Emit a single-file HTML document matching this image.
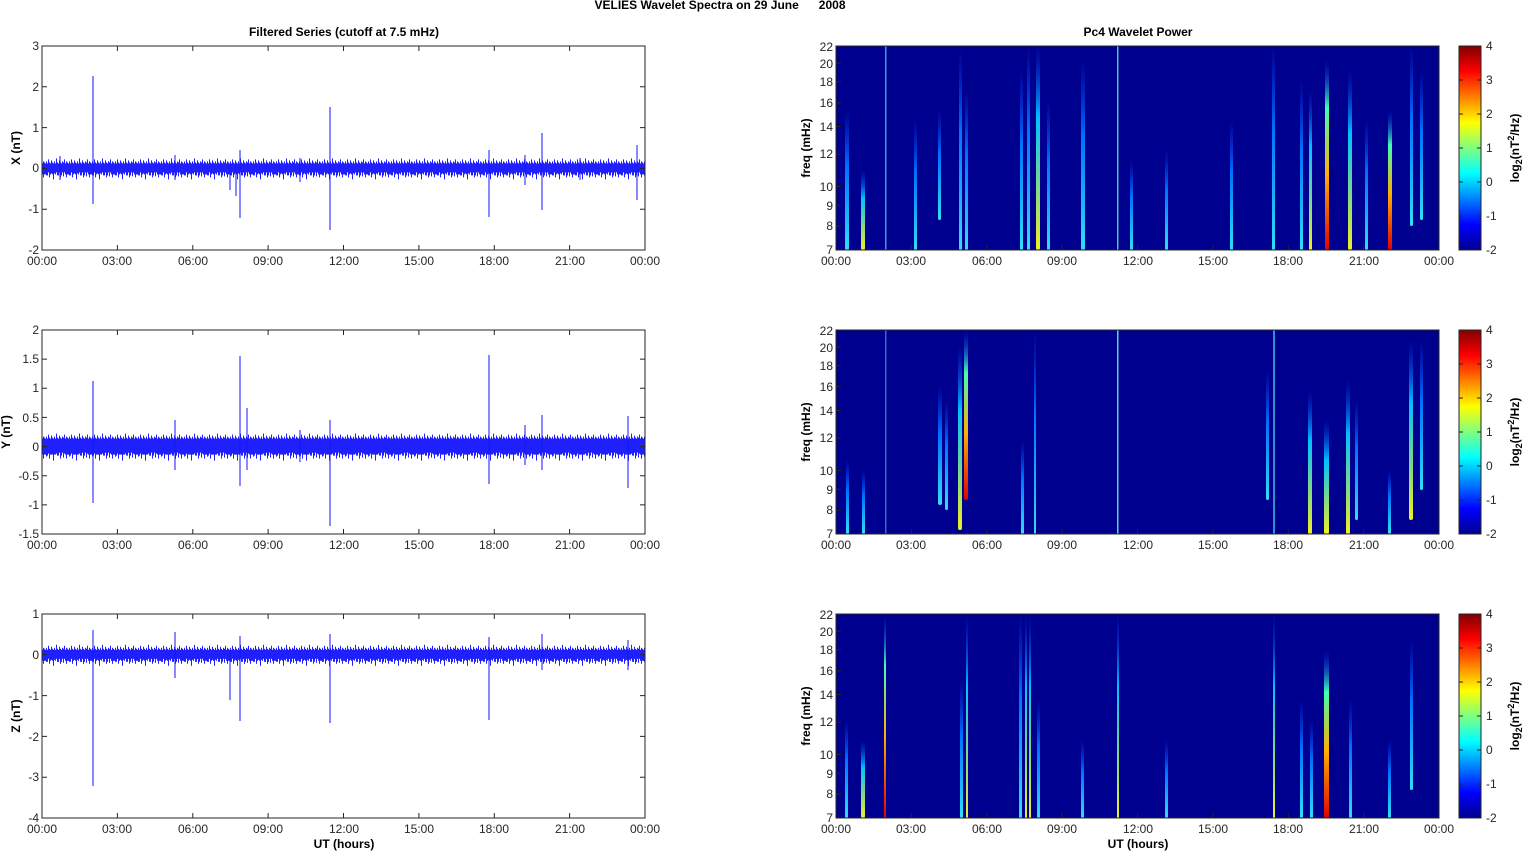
<!DOCTYPE html>
<html><head><meta charset="utf-8"><style>
html,body{margin:0;padding:0;background:#fff;}
svg{display:block;font-family:"Liberation Sans",Arial,sans-serif;}
.t{font-size:12px;fill:#262626;}
.b{font-size:12px;font-weight:bold;fill:#000;}
.ax{fill:none;stroke:#262626;stroke-width:1;}
.tk{stroke:#262626;stroke-width:1;}
</style></head><body>
<svg width="1526" height="851" viewBox="0 0 1526 851">
<defs>
<linearGradient id="jet" x1="0" y1="1" x2="0" y2="0">
<stop offset="0" stop-color="#00008f"/><stop offset="0.125" stop-color="#0000ff"/>
<stop offset="0.375" stop-color="#00ffff"/><stop offset="0.625" stop-color="#ffff00"/>
<stop offset="0.875" stop-color="#ff0000"/><stop offset="1" stop-color="#800000"/>
</linearGradient>
<linearGradient id="sc" x1="0" y1="0" x2="0" y2="1">
<stop offset="0" stop-color="#0040ff" stop-opacity="0"/><stop offset="0.4" stop-color="#0070ff"/><stop offset="1" stop-color="#30e0ff"/></linearGradient>
<linearGradient id="sy" x1="0" y1="0" x2="0" y2="1">
<stop offset="0" stop-color="#0040ff" stop-opacity="0"/><stop offset="0.35" stop-color="#00c0ff"/><stop offset="1" stop-color="#f0f020"/></linearGradient>
<linearGradient id="sr" x1="0" y1="0" x2="0" y2="1">
<stop offset="0" stop-color="#0040ff" stop-opacity="0"/><stop offset="0.25" stop-color="#40ffb0"/><stop offset="0.6" stop-color="#ffb000"/><stop offset="1" stop-color="#e00000"/></linearGradient>
<pattern id="nz" patternUnits="userSpaceOnUse" width="23" height="30">
<rect x="0" y="11" width="23" height="8" fill="#0000ff"/>
<g stroke="#2020ff" stroke-width="1">
<path d="M0.5 8v14M1.5 10v12M2.5 6v13M3.5 9v15M4.5 10v11M5.5 7v13M6.5 9v12M7.5 10v16M8.5 8v12M9.5 10v11M10.5 5v14M11.5 9v13M12.5 10v12M13.5 7v11M14.5 9v15M15.5 10v12M16.5 8v11M17.5 9v14M18.5 6v13M19.5 10v11M20.5 8v16M21.5 9v12M22.5 10v11"/>
</g></pattern>
<pattern id="nz2" patternUnits="userSpaceOnUse" width="23" height="30">
<rect x="0" y="9" width="23" height="12" fill="#0000ff"/>
<g stroke="#2020ff" stroke-width="1">
<path d="M0.5 5v20M1.5 7v17M2.5 3v19M3.5 6v21M4.5 7v16M5.5 4v19M6.5 6v17M7.5 7v22M8.5 5v18M9.5 7v16M10.5 2v20M11.5 6v18M12.5 7v17M13.5 4v16M14.5 6v21M15.5 7v17M16.5 5v16M17.5 6v20M18.5 3v19M19.5 7v16M20.5 5v22M21.5 6v17M22.5 7v16"/>
</g></pattern>
</defs>

<text x="720" y="9" class="b" text-anchor="middle">VELIES Wavelet Spectra on 29 June &#160;&#160;&#160;&#160;&#160;2008</text>
<text x="344" y="36" class="b" text-anchor="middle">Filtered Series (cutoff at 7.5 mHz)</text>
<text x="1138" y="36" class="b" text-anchor="middle">Pc4 Wavelet Power</text>

<!-- LEFT PANEL 1 -->
<g>
<g transform="translate(0,153.4)"><rect x="42" y="0" width="603" height="30" fill="url(#nz)"/></g>
<g stroke="#1515ff" stroke-width="1">
<line x1="93" y1="76" x2="93" y2="204"/><line x1="330" y1="107" x2="330" y2="230"/>
<line x1="489" y1="150" x2="489" y2="217"/><line x1="542" y1="133" x2="542" y2="210"/>
<line x1="240" y1="150" x2="240" y2="218"/><line x1="637" y1="145" x2="637" y2="200"/>
<line x1="60" y1="156" x2="60" y2="180"/><line x1="175" y1="155" x2="175" y2="180"/><line x1="300" y1="158" x2="300" y2="182"/><line x1="525" y1="155" x2="525" y2="185"/><line x1="580" y1="158" x2="580" y2="180"/>
<line x1="230" y1="165" x2="230" y2="190"/><line x1="236" y1="165" x2="236" y2="196"/>
</g>
<rect x="42" y="46" width="603" height="204" class="ax"/>
<g class="tk"><path d="M117.4 250v-5M192.8 250v-5M268.1 250v-5M343.5 250v-5M418.9 250v-5M494.3 250v-5M569.6 250v-5M117.4 46v5M192.8 46v5M268.1 46v5M343.5 46v5M418.9 46v5M494.3 46v5M569.6 46v5M42 86.8h5M42 127.6h5M42 168.4h5M42 209.2h5M645 86.8h-5M645 127.6h-5M645 168.4h-5M645 209.2h-5"/></g>
<g class="t" text-anchor="end"><text x="39" y="50">3</text><text x="39" y="91">2</text><text x="39" y="132">1</text><text x="39" y="172">0</text><text x="39" y="213">-1</text><text x="39" y="254">-2</text></g>
<g class="t" text-anchor="middle"><text x="42" y="265">00:00</text><text x="117" y="265">03:00</text><text x="193" y="265">06:00</text><text x="268" y="265">09:00</text><text x="344" y="265">12:00</text><text x="419" y="265">15:00</text><text x="494" y="265">18:00</text><text x="570" y="265">21:00</text><text x="645" y="265">00:00</text></g>
<text class="b" transform="translate(20,148) rotate(-90)" text-anchor="middle">X (nT)</text>
</g>

<!-- LEFT PANEL 2 -->
<g>
<g transform="translate(0,431.6)"><rect x="42" y="0" width="603" height="30" fill="url(#nz2)"/></g>
<g stroke="#1515ff" stroke-width="1">
<line x1="93" y1="381" x2="93" y2="503"/><line x1="240" y1="356" x2="240" y2="486"/><line x1="247" y1="408" x2="247" y2="470"/>
<line x1="330" y1="420" x2="330" y2="526"/><line x1="489" y1="355" x2="489" y2="484"/>
<line x1="175" y1="420" x2="175" y2="470"/><line x1="542" y1="415" x2="542" y2="470"/><line x1="628" y1="416" x2="628" y2="488"/>
<line x1="525" y1="425" x2="525" y2="465"/><line x1="300" y1="430" x2="300" y2="462"/>
</g>
<rect x="42" y="330" width="603" height="204" class="ax"/>
<g class="tk"><path d="M117.4 534v-5M192.8 534v-5M268.1 534v-5M343.5 534v-5M418.9 534v-5M494.3 534v-5M569.6 534v-5M117.4 330v5M192.8 330v5M268.1 330v5M343.5 330v5M418.9 330v5M494.3 330v5M569.6 330v5M42 359.1h5M42 388.3h5M42 417.4h5M42 446.6h5M42 475.7h5M42 504.9h5M645 359.1h-5M645 388.3h-5M645 417.4h-5M645 446.6h-5M645 475.7h-5M645 504.9h-5"/></g>
<g class="t" text-anchor="end"><text x="39" y="334">2</text><text x="39" y="363">1.5</text><text x="39" y="392">1</text><text x="39" y="422">0.5</text><text x="39" y="451">0</text><text x="39" y="480">-0.5</text><text x="39" y="509">-1</text><text x="39" y="538">-1.5</text></g>
<g class="t" text-anchor="middle"><text x="42" y="549">00:00</text><text x="117" y="549">03:00</text><text x="193" y="549">06:00</text><text x="268" y="549">09:00</text><text x="344" y="549">12:00</text><text x="419" y="549">15:00</text><text x="494" y="549">18:00</text><text x="570" y="549">21:00</text><text x="645" y="549">00:00</text></g>
<text class="b" transform="translate(10,432) rotate(-90)" text-anchor="middle">Y (nT)</text>
</g>

<!-- LEFT PANEL 3 -->
<g>
<g transform="translate(0,639.8)"><rect x="42" y="0" width="603" height="30" fill="url(#nz)"/></g>
<g stroke="#1515ff" stroke-width="1">
<line x1="93" y1="630" x2="93" y2="786"/><line x1="240" y1="636" x2="240" y2="721"/><line x1="230" y1="650" x2="230" y2="700"/>
<line x1="330" y1="634" x2="330" y2="723"/><line x1="489" y1="637" x2="489" y2="720"/>
<line x1="175" y1="632" x2="175" y2="678"/><line x1="542" y1="634" x2="542" y2="670"/><line x1="628" y1="640" x2="628" y2="670"/>
</g>
<rect x="42" y="614" width="603" height="204" class="ax"/>
<g class="tk"><path d="M117.4 818v-5M192.8 818v-5M268.1 818v-5M343.5 818v-5M418.9 818v-5M494.3 818v-5M569.6 818v-5M117.4 614v5M192.8 614v5M268.1 614v5M343.5 614v5M418.9 614v5M494.3 614v5M569.6 614v5M42 654.8h5M42 695.6h5M42 736.4h5M42 777.2h5M645 654.8h-5M645 695.6h-5M645 736.4h-5M645 777.2h-5"/></g>
<g class="t" text-anchor="end"><text x="39" y="618">1</text><text x="39" y="659">0</text><text x="39" y="700">-1</text><text x="39" y="741">-2</text><text x="39" y="781">-3</text><text x="39" y="822">-4</text></g>
<g class="t" text-anchor="middle"><text x="42" y="833">00:00</text><text x="117" y="833">03:00</text><text x="193" y="833">06:00</text><text x="268" y="833">09:00</text><text x="344" y="833">12:00</text><text x="419" y="833">15:00</text><text x="494" y="833">18:00</text><text x="570" y="833">21:00</text><text x="645" y="833">00:00</text></g>
<text class="b" transform="translate(20,716) rotate(-90)" text-anchor="middle">Z (nT)</text>
<text class="b" x="344" y="848" text-anchor="middle">UT (hours)</text>
</g>

<!-- RIGHT PANEL 1 -->
<g>
<rect x="836" y="46" width="603" height="204" fill="#00008f"/>
<g>
<rect x="845" y="110" width="4" height="140" rx="2" fill="url(#sc)"/>
<rect x="861" y="170" width="4" height="80" rx="2" fill="url(#sy)"/>
<rect x="885" y="46" width="1.5" height="204" fill="#3aa0c8"/>
<rect x="914" y="120" width="3" height="130" rx="1.5" fill="url(#sc)"/>
<rect x="938" y="110" width="3" height="110" rx="1.5" fill="url(#sc)"/>
<rect x="959" y="50" width="3" height="200" rx="1.5" fill="url(#sc)"/>
<rect x="965" y="90" width="3" height="160" rx="1.5" fill="url(#sc)"/>
<rect x="1020" y="70" width="3" height="180" rx="1.5" fill="url(#sc)"/>
<rect x="1027" y="46" width="3" height="204" rx="1.5" fill="url(#sc)"/>
<rect x="1036" y="46" width="4" height="204" rx="2" fill="url(#sy)"/>
<rect x="1047" y="100" width="3" height="150" rx="1.5" fill="url(#sc)"/>
<rect x="1081" y="60" width="4" height="190" rx="2" fill="url(#sc)"/>
<rect x="1117" y="46" width="1.5" height="204" fill="#50c0d0"/>
<rect x="1130" y="160" width="3" height="90" rx="1.5" fill="url(#sc)"/>
<rect x="1165" y="150" width="3" height="100" rx="1.5" fill="url(#sc)"/>
<rect x="1230" y="120" width="3" height="130" rx="1.5" fill="url(#sc)"/>
<rect x="1272" y="46" width="3" height="204" rx="1.5" fill="url(#sc)"/>
<rect x="1300" y="80" width="3" height="170" rx="1.5" fill="url(#sc)"/>
<rect x="1309" y="90" width="3" height="160" rx="1.5" fill="url(#sy)"/>
<rect x="1325" y="60" width="4" height="190" rx="2" fill="url(#sr)"/>
<rect x="1348" y="70" width="4" height="180" rx="2" fill="url(#sy)"/>
<rect x="1365" y="120" width="3" height="130" rx="1.5" fill="url(#sc)"/>
<rect x="1388" y="110" width="4" height="140" rx="2" fill="url(#sr)"/>
<rect x="1410" y="46" width="3" height="180" rx="1.5" fill="url(#sc)"/>
<rect x="1420" y="70" width="3" height="150" rx="1.5" fill="url(#sc)"/>
</g>
<rect x="836" y="46" width="603" height="204" class="ax"/>
<g class="tk"><path d="M911.4 250v-5M986.8 250v-5M1062.1 250v-5M1137.5 250v-5M1212.9 250v-5M1288.3 250v-5M1363.6 250v-5M836 226.2h5M836 205.2h5M836 186.5h5M836 154h5M836 126.5h5M836 102.7h5M836 81.7h5M836 63h5"/></g>
<g class="t" text-anchor="end"><text x="833" y="51">22</text><text x="833" y="68">20</text><text x="833" y="86">18</text><text x="833" y="107">16</text><text x="833" y="131">14</text><text x="833" y="158">12</text><text x="833" y="191">10</text><text x="833" y="210">9</text><text x="833" y="230">8</text><text x="833" y="254">7</text></g>
<g class="t" text-anchor="middle"><text x="836" y="265">00:00</text><text x="911" y="265">03:00</text><text x="987" y="265">06:00</text><text x="1062" y="265">09:00</text><text x="1138" y="265">12:00</text><text x="1213" y="265">15:00</text><text x="1288" y="265">18:00</text><text x="1364" y="265">21:00</text><text x="1439" y="265">00:00</text></g>
<text class="b" transform="translate(810,148) rotate(-90)" text-anchor="middle">freq (mHz)</text>
<rect x="1459" y="46" width="22" height="204" fill="url(#jet)" stroke="#262626"/>
<g class="tk"><path d="M1481 80h-4M1481 114h-4M1481 148h-4M1481 182h-4M1481 216h-4M1459 80h4M1459 114h4M1459 148h4M1459 182h4M1459 216h4"/></g>
<g class="t"><text x="1486" y="50">4</text><text x="1486" y="84">3</text><text x="1486" y="118">2</text><text x="1486" y="152">1</text><text x="1486" y="186">0</text><text x="1486" y="220">-1</text><text x="1486" y="254">-2</text></g>
<text class="b" transform="translate(1519,148) rotate(-90)" text-anchor="middle">log<tspan font-size="9" dy="3">2</tspan><tspan dy="-3">(nT</tspan><tspan font-size="9" dy="-5">2</tspan><tspan dy="5">/Hz)</tspan></text>
</g>

<!-- RIGHT PANEL 2 -->
<g>
<rect x="836" y="330" width="603" height="204" fill="#00008f"/>
<g>
<rect x="846" y="460" width="3" height="74" rx="1.5" fill="url(#sc)"/>
<rect x="862" y="470" width="3" height="64" rx="1.5" fill="url(#sc)"/>
<rect x="885" y="330" width="1.5" height="204" fill="#2a70c0"/>
<rect x="938" y="385" width="4" height="120" rx="2" fill="url(#sc)"/>
<rect x="945" y="400" width="3" height="110" rx="1.5" fill="url(#sc)"/>
<rect x="958" y="345" width="4" height="185" rx="2" fill="url(#sy)"/>
<rect x="964" y="330" width="4" height="170" rx="2" fill="url(#sr)"/>
<rect x="1021" y="440" width="3" height="94" rx="1.5" fill="url(#sc)"/>
<rect x="1034" y="330" width="2" height="204" rx="1" fill="url(#sc)"/>
<rect x="1117" y="330" width="1.5" height="204" fill="#60d0e0"/>
<rect x="1266" y="370" width="3" height="130" rx="1.5" fill="url(#sc)"/>
<rect x="1273" y="330" width="2" height="204" fill="#3090d0"/>
<rect x="1308" y="390" width="4" height="144" rx="2" fill="url(#sy)"/>
<rect x="1324" y="420" width="5" height="114" rx="2" fill="url(#sy)"/>
<rect x="1346" y="380" width="4" height="154" rx="2" fill="url(#sy)"/>
<rect x="1355" y="400" width="3" height="120" rx="1.5" fill="url(#sc)"/>
<rect x="1388" y="470" width="3" height="64" rx="1.5" fill="url(#sc)"/>
<rect x="1409" y="340" width="4" height="180" rx="2" fill="url(#sy)"/>
<rect x="1420" y="340" width="3" height="150" rx="1.5" fill="url(#sc)"/>
</g>
<rect x="836" y="330" width="603" height="204" class="ax"/>
<g class="tk"><path d="M911.4 534v-5M986.8 534v-5M1062.1 534v-5M1137.5 534v-5M1212.9 534v-5M1288.3 534v-5M1363.6 534v-5M836 510.2h5M836 489.2h5M836 470.5h5M836 438h5M836 410.5h5M836 386.7h5M836 365.7h5M836 347h5"/></g>
<g class="t" text-anchor="end"><text x="833" y="335">22</text><text x="833" y="352">20</text><text x="833" y="370">18</text><text x="833" y="391">16</text><text x="833" y="415">14</text><text x="833" y="442">12</text><text x="833" y="475">10</text><text x="833" y="494">9</text><text x="833" y="514">8</text><text x="833" y="538">7</text></g>
<g class="t" text-anchor="middle"><text x="836" y="549">00:00</text><text x="911" y="549">03:00</text><text x="987" y="549">06:00</text><text x="1062" y="549">09:00</text><text x="1138" y="549">12:00</text><text x="1213" y="549">15:00</text><text x="1288" y="549">18:00</text><text x="1364" y="549">21:00</text><text x="1439" y="549">00:00</text></g>
<text class="b" transform="translate(810,432) rotate(-90)" text-anchor="middle">freq (mHz)</text>
<rect x="1459" y="330" width="22" height="204" fill="url(#jet)" stroke="#262626"/>
<g class="tk"><path d="M1481 364h-4M1481 398h-4M1481 432h-4M1481 466h-4M1481 500h-4M1459 364h4M1459 398h4M1459 432h4M1459 466h4M1459 500h4"/></g>
<g class="t"><text x="1486" y="334">4</text><text x="1486" y="368">3</text><text x="1486" y="402">2</text><text x="1486" y="436">1</text><text x="1486" y="470">0</text><text x="1486" y="504">-1</text><text x="1486" y="538">-2</text></g>
<text class="b" transform="translate(1519,432) rotate(-90)" text-anchor="middle">log<tspan font-size="9" dy="3">2</tspan><tspan dy="-3">(nT</tspan><tspan font-size="9" dy="-5">2</tspan><tspan dy="5">/Hz)</tspan></text>
</g>

<!-- RIGHT PANEL 3 -->
<g>
<rect x="836" y="614" width="603" height="204" fill="#00008f"/>
<g>
<rect x="845" y="720" width="3" height="98" rx="1.5" fill="url(#sc)"/>
<rect x="861" y="740" width="4" height="78" rx="2" fill="url(#sy)"/>
<rect x="884" y="614" width="2" height="204" fill="url(#sr)"/>
<rect x="960" y="680" width="3" height="138" rx="1.5" fill="url(#sc)"/>
<rect x="966" y="614" width="2" height="204" fill="url(#sy)"/>
<rect x="1019" y="614" width="3" height="204" fill="url(#sc)"/>
<rect x="1025" y="614" width="2" height="204" fill="url(#sy)"/>
<rect x="1029" y="614" width="2" height="204" fill="url(#sy)"/>
<rect x="1037" y="700" width="3" height="118" rx="1.5" fill="url(#sc)"/>
<rect x="1081" y="740" width="3" height="78" rx="1.5" fill="url(#sc)"/>
<rect x="1117" y="614" width="2" height="204" fill="url(#sy)"/>
<rect x="1165" y="740" width="3" height="78" rx="1.5" fill="url(#sc)"/>
<rect x="1273" y="614" width="2" height="204" fill="url(#sy)"/>
<rect x="1300" y="700" width="3" height="118" rx="1.5" fill="url(#sc)"/>
<rect x="1310" y="720" width="3" height="98" rx="1.5" fill="url(#sc)"/>
<rect x="1324" y="650" width="5" height="168" rx="2" fill="url(#sr)"/>
<rect x="1349" y="700" width="3" height="118" rx="1.5" fill="url(#sc)"/>
<rect x="1388" y="740" width="3" height="78" rx="1.5" fill="url(#sc)"/>
<rect x="1410" y="640" width="3" height="150" rx="1.5" fill="url(#sc)"/>
</g>
<rect x="836" y="614" width="603" height="204" class="ax"/>
<g class="tk"><path d="M911.4 818v-5M986.8 818v-5M1062.1 818v-5M1137.5 818v-5M1212.9 818v-5M1288.3 818v-5M1363.6 818v-5M836 794.2h5M836 773.2h5M836 754.5h5M836 722h5M836 694.5h5M836 670.7h5M836 649.7h5M836 631h5"/></g>
<g class="t" text-anchor="end"><text x="833" y="619">22</text><text x="833" y="636">20</text><text x="833" y="654">18</text><text x="833" y="675">16</text><text x="833" y="699">14</text><text x="833" y="726">12</text><text x="833" y="759">10</text><text x="833" y="778">9</text><text x="833" y="798">8</text><text x="833" y="822">7</text></g>
<g class="t" text-anchor="middle"><text x="836" y="833">00:00</text><text x="911" y="833">03:00</text><text x="987" y="833">06:00</text><text x="1062" y="833">09:00</text><text x="1138" y="833">12:00</text><text x="1213" y="833">15:00</text><text x="1288" y="833">18:00</text><text x="1364" y="833">21:00</text><text x="1439" y="833">00:00</text></g>
<text class="b" transform="translate(810,716) rotate(-90)" text-anchor="middle">freq (mHz)</text>
<text class="b" x="1138" y="848" text-anchor="middle">UT (hours)</text>
<rect x="1459" y="614" width="22" height="204" fill="url(#jet)" stroke="#262626"/>
<g class="tk"><path d="M1481 648h-4M1481 682h-4M1481 716h-4M1481 750h-4M1481 784h-4M1459 648h4M1459 682h4M1459 716h4M1459 750h4M1459 784h4"/></g>
<g class="t"><text x="1486" y="618">4</text><text x="1486" y="652">3</text><text x="1486" y="686">2</text><text x="1486" y="720">1</text><text x="1486" y="754">0</text><text x="1486" y="788">-1</text><text x="1486" y="822">-2</text></g>
<text class="b" transform="translate(1519,716) rotate(-90)" text-anchor="middle">log<tspan font-size="9" dy="3">2</tspan><tspan dy="-3">(nT</tspan><tspan font-size="9" dy="-5">2</tspan><tspan dy="5">/Hz)</tspan></text>
</g>
</svg>
</body></html>
